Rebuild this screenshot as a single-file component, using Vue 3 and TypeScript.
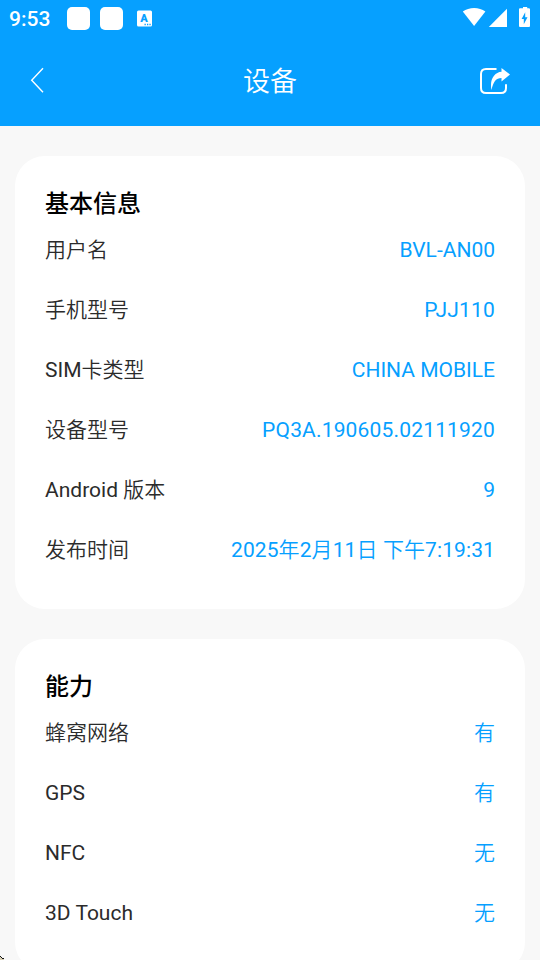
<script setup lang="ts">
interface InfoRow {
  label: string
  value: string
  spacing?: 'wide' | 'normal'
}

interface InfoSection {
  title: string
  rows: InfoRow[]
}

const sections: InfoSection[] = [
  {
    title: '基本信息',
    rows: [
      { label: '用户名', value: 'BVL-AN00' },
      { label: '手机型号', value: 'PJJ110', spacing: 'wide' },
      { label: 'SIM卡类型', value: 'CHINA MOBILE' },
      { label: '设备型号', value: 'PQ3A.190605.02111920', spacing: 'wide' },
      { label: 'Android 版本', value: '9' },
      { label: '发布时间', value: '2025年2月11日 下午7:19:31', spacing: 'normal' },
    ],
  },
  {
    title: '能力',
    rows: [
      { label: '蜂窝网络', value: '有' },
      { label: 'GPS', value: '有' },
      { label: 'NFC', value: '无' },
      { label: '3D Touch', value: '无' },
    ],
  },
]
</script>

<template>
  <div class="screen">
    <header class="top">
      <div class="status">
        <span class="clock">9:53</span>
        <span class="chip"></span>
        <span class="chip"></span>
        <svg class="ime" width="15" height="17" viewBox="0 0 15 17">
          <rect x="0" y="0.5" width="15" height="16" rx="1.5" fill="#fff" />
          <text class="ime-letter" x="7" y="12.2" text-anchor="middle">A</text>
          <path d="M7.5 14.5h1.3M10 14.5h1.3M12.4 14.5h1.3" stroke="#06a0ff" stroke-width="1.3" />
        </svg>
        <svg class="signals" width="70" height="24" viewBox="0 0 70 24">
          <path d="M1.8 5.6 C8 .9 18.2 .9 24.4 5.6 L13.1 20 Z" fill="#fff" />
          <path d="M27.8 21 L46 2.8 V21 Z" fill="#fff" />
          <path d="M60.8 2.2 H62 V1 H66.2 V2.2 H67.8 Q69 2.2 69 3.2 V20 Q69 21 68 21 H59 Q58 21 58 20 V3.2 Q58 2.2 59 2.2 Z" fill="#fff" />
          <path d="M64.2 6.3 L60.6 13 H62.8 V18.3 L66.5 11.2 H64.2 Z" fill="#06a0ff" />
        </svg>
      </div>
      <nav class="nav">
        <svg class="back" width="16" height="28" viewBox="0 0 16 28">
          <path d="M13 2.2 L1.7 14.2 L13 26.2" fill="none" stroke="#fff" stroke-width="1.4" />
        </svg>
        <h1>设备</h1>
        <svg class="share" width="31" height="28" viewBox="0 0 31 28">
          <path d="M16.5 2 H6 Q1 2 1 7 V21 Q1 26 6 26 H21 Q26 26 26 21 V17.3" fill="none" stroke="#fff" stroke-width="2" />
          <path d="M21.5 1 L30 7.5 L21.5 14.5 V11 C16 11 13.5 14.5 11.5 23 C10.5 17.5 11 12.3 14 8.8 C16 6.3 18.5 5 21.5 4.8 Z" fill="#fff" />
        </svg>
      </nav>
    </header>
    <main class="content">
      <section v-for="section in sections" :key="section.title" class="card">
        <h2>{{ section.title }}</h2>
        <dl>
          <div v-for="row in section.rows" :key="row.label" class="row">
            <dt>{{ row.label }}</dt>
            <dd :class="row.spacing">{{ row.value }}</dd>
          </div>
        </dl>
      </section>
    </main>
    <svg class="cursor" width="4" height="5" viewBox="0 0 4 5" shape-rendering="crispEdges">
      <path d="M0 1h1v1h1v1h1v1h1v1H0Z" fill="#d9d0b5" />
      <path d="M0 1h1v1H0ZM1 2h1v1H1ZM2 3h2v1H2Z" fill="#111" />
    </svg>
  </div>
</template>

<style>
body {
  overflow: hidden;
}
</style>

<style scoped>
.screen {
  position: relative;
  height: 960px;
  overflow: hidden;
  background: #f8f8f8;
  font-family: Roboto, "Noto Sans CJK SC DemiLight", "Noto Sans CJK SC", sans-serif;
}
.top {
  height: 126px;
  background: #06a0ff;
  color: #fff;
}
.status {
  display: flex;
  align-items: center;
  height: 36px;
  padding: 0 9px;
}
.clock {
  width: 58px;
  font-size: 21px;
  font-weight: 500;
  line-height: 38px;
  padding-top: 2px;
}
.chip {
  width: 23px;
  height: 23px;
  margin-right: 10px;
  border-radius: 5px;
  background: #fff;
}
.ime {
  margin-left: 4px;
}
.ime-letter {
  fill: #06a0ff;
  font-size: 11px;
  font-weight: 900;
}
.signals {
  margin-left: auto;
}
.nav {
  display: flex;
  align-items: center;
  justify-content: space-between;
  height: 90px;
  padding: 0 29px 0 30px;
}
.back {
  margin: 0 15px 2px 0;
}
h1 {
  margin: 0;
  padding: 2px 1px 0 0;
  font-size: 27px;
  font-weight: 400;
  line-height: 36px;
}
.content {
  display: flex;
  flex-direction: column;
  gap: 30px;
  padding: 30px 15px;
}
.card {
  padding: 30px 30px 29px;
  border-radius: 30px;
  background: #fff;
}
h2 {
  margin: 0;
  padding-top: 2px;
  color: #000;
  font-family: Roboto, "Noto Sans CJK SC", sans-serif;
  font-size: 24px;
  font-weight: 500;
  line-height: 32px;
}
dl {
  margin: 0;
}
.row {
  display: flex;
  align-items: center;
  justify-content: space-between;
  height: 60px;
  font-size: 21px;
  line-height: 30px;
}
dt {
  color: #2b2b2b;
}
dd {
  margin: 0;
  color: #06a0ff;
}
.wide {
  letter-spacing: 0.17px;
}
.normal {
  letter-spacing: 0.1px;
}
.cursor {
  position: absolute;
  left: 0;
  bottom: 0;
}
</style>
